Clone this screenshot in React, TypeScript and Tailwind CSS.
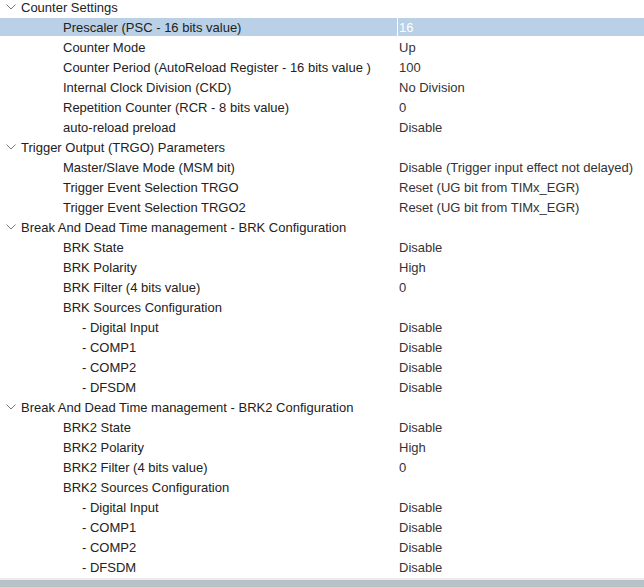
import React from "react";

type Row = { level: 0 | 1 | 2; label: string; value?: string; selected?: boolean };

const rows: Row[] = [
  { level: 0, label: "Counter Settings" },
  { level: 1, label: "Prescaler (PSC - 16 bits value)", value: "16", selected: true },
  { level: 1, label: "Counter Mode", value: "Up" },
  { level: 1, label: "Counter Period (AutoReload Register - 16 bits value )", value: "100" },
  { level: 1, label: "Internal Clock Division (CKD)", value: "No Division" },
  { level: 1, label: "Repetition Counter (RCR - 8 bits value)", value: "0" },
  { level: 1, label: "auto-reload preload", value: "Disable" },
  { level: 0, label: "Trigger Output (TRGO) Parameters" },
  { level: 1, label: "Master/Slave Mode (MSM bit)", value: "Disable (Trigger input effect not delayed)" },
  { level: 1, label: "Trigger Event Selection TRGO", value: "Reset (UG bit from TIMx_EGR)" },
  { level: 1, label: "Trigger Event Selection TRGO2", value: "Reset (UG bit from TIMx_EGR)" },
  { level: 0, label: "Break And Dead Time management - BRK Configuration" },
  { level: 1, label: "BRK State", value: "Disable" },
  { level: 1, label: "BRK Polarity", value: "High" },
  { level: 1, label: "BRK Filter (4 bits value)", value: "0" },
  { level: 1, label: "BRK Sources Configuration" },
  { level: 2, label: "- Digital Input", value: "Disable" },
  { level: 2, label: "- COMP1", value: "Disable" },
  { level: 2, label: "- COMP2", value: "Disable" },
  { level: 2, label: "- DFSDM", value: "Disable" },
  { level: 0, label: "Break And Dead Time management - BRK2 Configuration" },
  { level: 1, label: "BRK2 State", value: "Disable" },
  { level: 1, label: "BRK2 Polarity", value: "High" },
  { level: 1, label: "BRK2 Filter (4 bits value)", value: "0" },
  { level: 1, label: "BRK2 Sources Configuration" },
  { level: 2, label: "- Digital Input", value: "Disable" },
  { level: 2, label: "- COMP1", value: "Disable" },
  { level: 2, label: "- COMP2", value: "Disable" },
  { level: 2, label: "- DFSDM", value: "Disable" },
];

function Chevron() {
  return (
    <svg width="10" height="6" viewBox="0 0 10 6" className="shrink-0">
      <polyline points="0.5,0.5 5,5 9.5,0.5" fill="none" stroke="#7a7a7a" strokeWidth="1" />
    </svg>
  );
}

export default function App() {
  return (
    <div
      className="w-[644px] h-[587px] bg-white overflow-hidden flex flex-col text-[13px] text-[#222]"
      style={{ fontFamily: '"Liberation Sans", Arial, sans-serif' }}
    >
      <div className="flex-1 overflow-hidden">
        <div className="-mt-[3px]">
          {rows.map((r, i) => {
            if (r.level === 0) {
              return (
                <div key={i} className="h-[20px] flex items-center pl-[6px] gap-[5px]">
                  <Chevron />
                  <span className="leading-none">{r.label}</span>
                </div>
              );
            }
            const bg = r.selected ? "bg-[#b9d0e6]" : "";
            return (
              <div key={i} className="h-[20px] flex items-stretch py-[1px]">
                <div
                  className={`w-[397px] flex items-center pt-[2px] whitespace-nowrap overflow-hidden ${bg} ${
                    r.level === 1 ? "pl-[63px]" : "pl-[82px]"
                  }`}
                >
                  {r.label}
                </div>
                <div className="w-[1px]" />
                <div
                  className={`flex-1 flex items-center pt-[2px] pl-[1px] whitespace-nowrap ${bg} ${
                    r.selected ? "text-white" : "text-[#333]"
                  }`}
                >
                  {r.value ?? ""}
                </div>
              </div>
            );
          })}
        </div>
      </div>
      <div className="h-[2px] bg-[#ececec]" />
      <div className="h-[7px] bg-[#b7c2c6]" />
    </div>
  );
}
